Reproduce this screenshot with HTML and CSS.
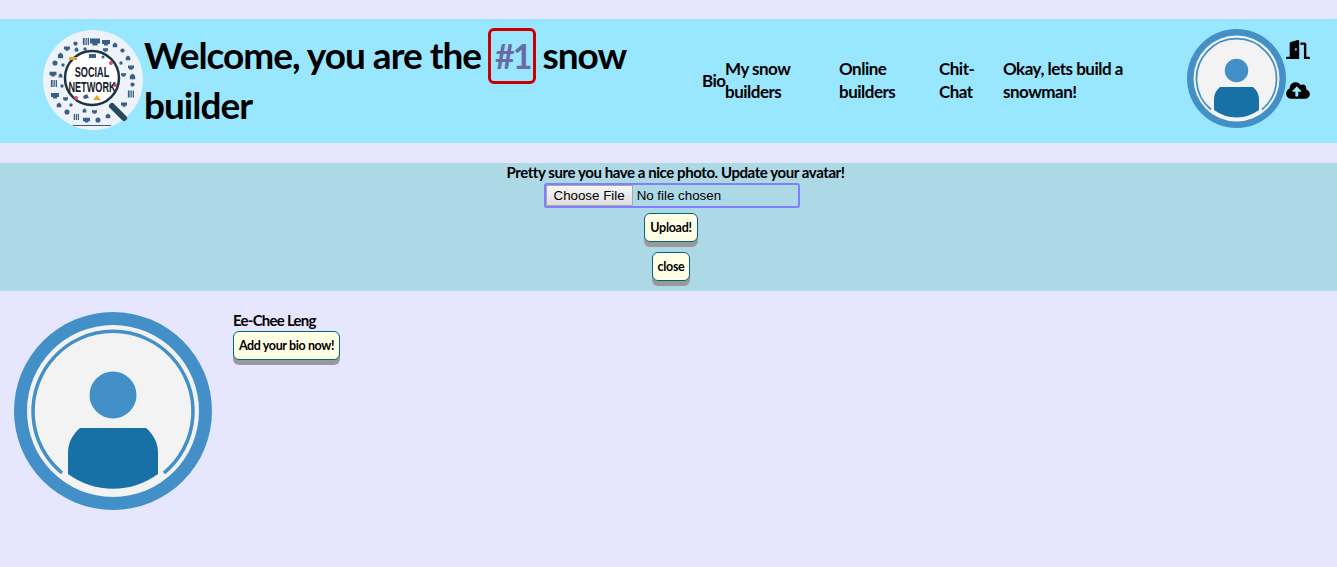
FILE: index.html
```html
<!DOCTYPE html>
<html lang="en">
<head>
  <meta charset="UTF-8">
  <title>Social Network</title>
  <link rel="stylesheet" href="styles.css">
</head>
<body>
  <svg class="defs">
    <symbol id="avatar" viewBox="0 0 198 198">
      <circle cx="99" cy="99" r="99" fill="#4390c8"/>
      <circle cx="99" cy="99" r="86" fill="#f3f3f3"/>
      <path d="M48 161A80 80 0 1 1 150 161" fill="none" stroke="#4390c8" stroke-width="3.5"/>
      <circle cx="99" cy="83" r="23.5" fill="#4390c8"/>
      <path d="M54 162V141C54 130 59 122 66 116H132C139 122 144 130 144 141V162A76 76 0 0 1 54 162Z" fill="#1771a6"/>
    </symbol>
    <symbol id="g1" viewBox="0 0 8 8"><path d="M1 7V3L4 0.5 7 3V7Z"/></symbol>
    <symbol id="g2" viewBox="0 0 8 8"><circle cx="4" cy="4" r="3.4"/></symbol>
    <symbol id="g3" viewBox="0 0 8 8"><path d="M0 2H8V6H6V7.5H2V6H0Z"/></symbol>
    <symbol id="g4" viewBox="0 0 8 8"><path d="M1 0H3V8H1ZM4 0H5.5V8H4ZM6.5 0H8V8H6.5Z"/></symbol>
  </svg>

  <header class="top-bar">
    <svg class="logo" viewBox="0 0 100 100">
      <circle cx="50" cy="50" r="50" fill="#edf3f8"/>
      <g class="logo-icons">
        <use href="#g4" x="39" y="8" width="7" height="7"/>
        <use href="#g3" x="47" y="6" width="10" height="10"/>
        <use href="#g3" x="59" y="8" width="8" height="8"/>
        <use href="#g1" x="69" y="12" width="6" height="6"/>
        <use href="#g2" x="77" y="18" width="5" height="5"/>
        <use href="#g1" x="82" y="25" width="6" height="6"/>
        <use href="#g3" x="85" y="34" width="6" height="6"/>
        <use href="#g1" x="86" y="43" width="7" height="7"/>
        <use href="#g2" x="87" y="52" width="5" height="5"/>
        <use href="#g4" x="84" y="60" width="7" height="8"/>
        <use href="#g3" x="78" y="71" width="6" height="6"/>
        <use href="#g1" x="62" y="83" width="6" height="6"/>
        <use href="#g2" x="52" y="87" width="6" height="6"/>
        <use href="#g3" x="40" y="86" width="7" height="7"/>
        <use href="#g4" x="30" y="84" width="6" height="6"/>
        <use href="#g2" x="21" y="79" width="6" height="6"/>
        <use href="#g1" x="13" y="72" width="6" height="6"/>
        <use href="#g3" x="8" y="61" width="8" height="8"/>
        <use href="#g4" x="7" y="50" width="7" height="7"/>
        <use href="#g3" x="6" y="40" width="8" height="7"/>
        <use href="#g2" x="9" y="30" width="6" height="6"/>
        <use href="#g1" x="14" y="22" width="7" height="7"/>
        <use href="#g3" x="21" y="15" width="6" height="6"/>
        <use href="#g2" x="30" y="11" width="5" height="5"/>
        <use href="#g1" x="31" y="17" width="5" height="5"/>
        <use href="#g2" x="40" y="17" width="4" height="4"/>
        <use href="#g3" x="60" y="17" width="5" height="5"/>
        <use href="#g2" x="76" y="31" width="4" height="4"/>
        <use href="#g3" x="78" y="42" width="5" height="5"/>
        <use href="#g1" x="15" y="43" width="5" height="5"/>
        <use href="#g2" x="17" y="54" width="4" height="4"/>
        <use href="#g3" x="20" y="66" width="5" height="5"/>
        <use href="#g2" x="26" y="73" width="4" height="4"/>
        <use href="#g1" x="39" y="78" width="5" height="5"/>
        <use href="#g3" x="49" y="79" width="5" height="5"/>
        <use href="#g2" x="18" y="33" width="4" height="4"/>
      </g>
      <rect x="30" y="95" width="38" height="1" fill="#44566a"/>
      <path d="M69 76L81 88" stroke="#27485f" stroke-width="6" stroke-linecap="round"/>
      <circle cx="49" cy="48" r="27" fill="#fff" stroke="#1f3547" stroke-width="2.5"/>
      <rect x="26" y="27" width="8" height="3" fill="#e6a23c"/>
      <rect x="46" y="24" width="7" height="4" fill="#3c5f86"/>
      <circle cx="60" cy="27" r="1.5" fill="#3c5f86"/>
      <circle cx="68" cy="33" r="2" fill="#e0466a"/>
      <circle cx="72" cy="55" r="2" fill="#e0466a"/>
      <path d="M50 70L54 65 58 70Z" fill="#eda62a"/>
      <path d="M40 66L44 64 46 68 41 69Z" fill="#3c5f86"/>
      <circle cx="33" cy="68" r="2" fill="#e0466a"/>
      <text class="logo-text" transform="translate(49 47) scale(.61 1)" text-anchor="middle">SOCIAL</text>
      <text class="logo-text" transform="translate(49 62) scale(.61 1)" text-anchor="middle">NETWORK</text>
    </svg>
    <h1 class="title">Welcome, you are the <span class="rank">#1</span> snow builder</h1>
    <nav class="main-nav">
      <a href="#">Bio</a>
      <a href="#">My snow builders</a>
      <a href="#">Online builders</a>
      <a href="#">Chit-Chat</a>
      <a href="#">Okay, lets build a snowman!</a>
    </nav>
    <svg class="top-avatar"><use href="#avatar"/></svg>
    <div class="top-icons">
      <svg class="icon" viewBox="0 0 640 512"><path d="M624 448h-80V113.45C544 86.19 522.47 64 496 64H384v64h96v384h144c8.84 0 16-7.16 16-16v-32c0-8.84-7.16-16-16-16zM312.24 1.01l-192 49.74C105.99 54.44 96 67.7 96 82.92V448H16c-8.84 0-16 7.16-16 16v32c0 8.84 7.16 16 16 16h336V33.18c0-21.58-19.56-37.41-39.76-32.17zM264 288c-13.25 0-24-14.33-24-32s10.75-32 24-32 24 14.33 24 32-10.75 32-24 32z"/></svg>
      <svg class="icon" viewBox="0 0 640 512"><path d="M537.6 226.6c4.1-10.7 6.4-22.4 6.4-34.6 0-53-43-96-96-96-19.7 0-38.1 6-53.3 16.2C367 64.2 315.3 32 256 32c-88.4 0-160 71.6-160 160 0 2.7.1 5.4.2 8.1C40.2 219.8 0 273.2 0 336c0 79.5 64.5 144 144 144h368c70.7 0 128-57.3 128-128 0-61.9-44-113.6-102.4-125.4zM393.4 288H328v112c0 8.8-7.2 16-16 16h-48c-8.8 0-16-7.2-16-16V288h-65.4c-14.3 0-21.4-17.2-11.3-27.3l105.4-105.4c6.2-6.2 16.4-6.2 22.6 0l105.4 105.4c10.1 10.1 2.9 27.3-11.3 27.3z"/></svg>
    </div>
  </header>

  <section class="uploader">
    <p class="uploader-text">Pretty sure you have a nice photo. Update your avatar!</p>
    <input class="file-input" type="file">
    <button class="btn upload-btn">Upload!</button>
    <button class="btn close-btn">close</button>
  </section>

  <main class="profile">
    <svg class="profile-avatar"><use href="#avatar"/></svg>
    <div class="profile-info">
      <div class="profile-name">Ee-Chee Leng</div>
      <button class="btn">Add your bio now!</button>
    </div>
  </main>
</body>
</html>
```

FILE: styles.css
```css
body {
  margin: 0;
  min-height: 567px;
  background: #e6e6ff;
  font-family: "Lato", sans-serif;
  font-weight: 700;
  color: #000;
  overflow: hidden;
}
.defs { display: none; }

.top-bar {
  display: flex;
  align-items: center;
  height: 124px;
  margin-top: 19px;
  padding-left: 43px;
  background: #99e6ff;
}
.logo { flex: none; width: 100px; height: 100px; margin-bottom: 2px; }
.logo-icons { fill: #3c5f86; }
.logo-text {
  font-family: "Liberation Sans", sans-serif;
  font-size: 15px;
  font-weight: 700;
  fill: #14202b;
}
.title {
  flex: none;
  width: 558px;
  margin: 0 0 3px 1px;
  font-size: 37px;
  line-height: 50px;
  letter-spacing: -1px;
}
.rank {
  display: inline-block;
  padding: 0 3px 0 4px;
  height: 50px;
  border: 3px solid #cc0000;
  border-radius: 6px;
  color: #6a6aa5;
  vertical-align: top;
  margin: -2px -2px -4px -1px;
  font-size: 34px;
  letter-spacing: -2px;
}

.main-nav {
  flex: none;
  display: grid;
  grid-template-columns: 23px 114px 100px 64px 184px;
  align-items: center;
  width: 485px;
  margin-bottom: 2px;
}
.main-nav a {
  color: #000;
  text-decoration: none;
  font-size: 17px;
  line-height: 23px;
  letter-spacing: -0.5px;
}
.top-avatar { flex: none; width: 99px; height: 99px; margin-bottom: 5px; }
.top-icons {
  display: flex;
  flex-direction: column;
  gap: 22px;
  margin-bottom: 22px;
}
.icon { display: block; width: 24px; height: 19px; }

.uploader {
  display: flex;
  flex-direction: column;
  align-items: center;
  height: 128px;
  margin-top: 20px;
  padding-left: 5px;
  background: #add8e6;
}
.uploader-text {
  margin: -1px 0 1px 9px;
  font-size: 15px;
  line-height: 20px;
  letter-spacing: -0.42px;
}
.file-input {
  box-sizing: border-box;
  width: 256px;
  height: 25px;
  margin-left: 1px;
  border: 2px solid #8080ff;
  border-radius: 3px;
  font-family: "Liberation Sans", sans-serif;
  font-size: 13.33px;
  font-weight: 400;
}
.file-input::file-selector-button {
  height: 21px;
  margin-right: 4px;
  padding: 0 7px;
  border: 1px solid #a9a9a9;
  border-radius: 0;
  background: linear-gradient(#f6f6f6, #dedede);
  font-size: 13.33px;
}
.btn {
  display: block;
  height: 29px;
  padding: 0;
  border: 1px solid #006680;
  border-radius: 6px;
  background: #ffffe6;
  box-shadow: 0 5px 0 #999;
  font-family: inherit;
  font-size: 12.5px;
  font-weight: 700;
  letter-spacing: -0.3px;
  color: #000;
}
.upload-btn { margin-top: 5px; width: 54px; }
.close-btn { margin-top: 10px; width: 38px; }
.profile-info .btn { width: 107px; letter-spacing: -0.38px; }

.profile {
  display: flex;
  gap: 21px;
  padding: 21px 14px;
}
.profile-avatar { flex: none; width: 198px; height: 198px; }
.profile-name {
  margin-top: -1px;
  margin-bottom: 1px;
  font-size: 15px;
  line-height: 19px;
  letter-spacing: -0.75px;
}
```
